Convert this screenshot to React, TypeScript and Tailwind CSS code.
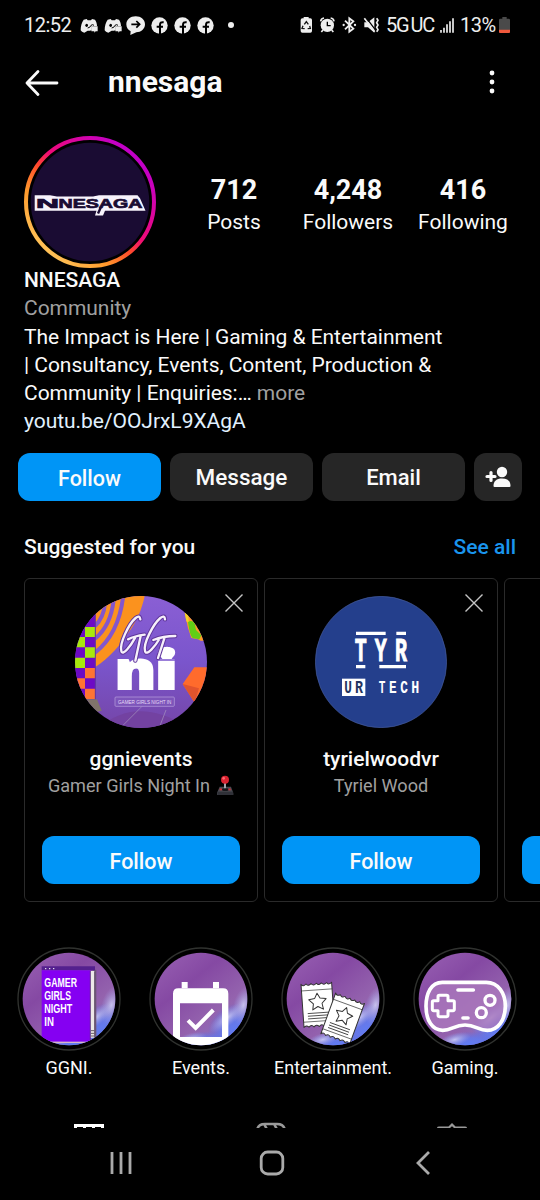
import type { ReactNode } from "react";

const stats = [
  { value: "712", label: "Posts", width: "w-[76px]" },
  { value: "4,248", label: "Followers", width: "w-[152px]" },
  { value: "416", label: "Following", width: "w-[78px]" },
];

/* ---------- Status bar icons ---------- */

const DiscordIcon = () => (
  <svg viewBox="238 54 54 45" className="h-[15px] w-[18px]">
    <path
      d="M249 59l9-2 3 4h10l3-4 9 2c4 6 6 12 6 19h-16v12l-5 2h-7l-10 6c-5-1-9-4-11-7 0-13 3-24 9-32z"
      fill="#eee"
    />
    <ellipse cx="258" cy="76" rx="4" ry="5" fill="#000" />
    <path d="M261 84q8-1 10-8q5-4 9 0" fill="none" stroke="#000" strokeWidth="3" />
    <path d="M272 79h19v15h-6l-4 4v-4h-9z" fill="#eee" />
  </svg>
);

const ChatArrowIcon = () => (
  <svg viewBox="378 47 57 57" className="h-[19px] w-[19px]">
    <path d="M407 48c16 0 28 10 28 24s-12 24-26 24l-18 8 1-11c-8-4-13-12-13-21 0-14 12-24 28-24z" fill="#eee" />
    <path d="M394 72h24M409 62l10 10-10 10" fill="none" stroke="#000" strokeWidth="5" />
  </svg>
);

const FacebookIcon = () => (
  <svg viewBox="0 0 51 51" className="h-[17px] w-[17px]">
    <circle cx="25.5" cy="25.5" r="24.5" fill="#eee" />
    <path d="M27 51V24c0-7 3-9 11-8M17 29h19" fill="none" stroke="#000" strokeWidth="6" />
  </svg>
);

const StatusBar = () => (
  <div className="flex h-[50px] items-center justify-between pl-6 pr-[30px] text-[#eee]">
    <div className="flex items-center">
      <span className="w-[56px] text-[20px] tracking-[-0.5px]">12:52</span>
      <div className="flex items-center gap-[6px]">
        <DiscordIcon />
        <DiscordIcon />
      </div>
      <div className="ml-1 flex items-center gap-[6px]">
        <ChatArrowIcon />
        <FacebookIcon />
        <FacebookIcon />
        <FacebookIcon />
      </div>
      <span className="ml-[14px] size-[6px] rounded-full bg-[#eee]" />
    </div>
    <div className="flex items-center">
      <svg viewBox="88 48 240 54" className="h-[18px] w-[80px]">
        {/* Battery saver */}
        <path d="M99 51h15v4h5q5 0 5 5v33q0 5-5 5H95q-5 0-5-5V60q0-5 5-5h4z" fill="#eee" />
        <path d="M101 73l6-8 6 8M117 78l2 7-8 1M102 86l-8-1 3-8" fill="none" stroke="#111" strokeWidth="4" />
        {/* Alarm */}
        <circle cx="170" cy="76" r="20" fill="#eee" />
        <path d="M150 64q1-9 10-10M180 54q9 1 10 10M157 90l-5 6M183 90l5 6" fill="none" stroke="#eee" strokeWidth="5" />
        <path d="M170 65v12h10" fill="none" stroke="#000" strokeWidth="4" />
        {/* Bluetooth */}
        <path d="M223 62l25 24-12 9V55l12 9-25 24" fill="none" stroke="#eee" strokeWidth="5.5" />
        <circle cx="219" cy="75" r="3.500" fill="#eee" />
        <circle cx="253" cy="75" r="3.500" fill="#eee" />
        {/* Vibrate / muted */}
        <path d="M281 67h11l19-15v46l-19-16h-11z" fill="#eee" />
        <path d="M286 52l27 36" stroke="#000" strokeWidth="4" />
        <path d="M281 55l31 40" stroke="#eee" strokeWidth="5" />
        <path d="M318 55l4 6-4 7 4 7-4 7 4 7-4 6" fill="none" stroke="#eee" strokeWidth="5" />
      </svg>
      <span className="ml-[6px] w-[54px] text-[20px] tracking-[-1.2px]">
        5G<span className="ml-[2px]">UC</span>
      </span>
      <svg viewBox="0 0 42 45" className="h-[15px] w-[14px]">
        <path d="M3 36v8M12 29v15M21 19v25M30 10v34M39 1v43" stroke="#eee" strokeWidth="5" />
      </svg>
      <span className="ml-[6px] w-[39px] text-[20px] tracking-[-0.5px]">13%</span>
      <svg viewBox="0 0 33 48" className="h-4 w-[11px]">
        <path d="M10 0h13v5h6q4 0 4 4v35q0 4-4 4H4q-4 0-4-4V9q0-4 4-4h6z" fill="#4a4a4a" />
        <path d="M0 38h33v6q0 4-4 4H4q-4 0-4-4z" fill="#f0583c" />
      </svg>
    </div>
  </div>
);

/* ---------- Profile ---------- */

const ProfileAvatar = () => (
  <svg viewBox="0 0 132 132" className="size-[132px] shrink-0">
    <defs>
      <linearGradient id="story" x1="0.15" y1="0.9" x2="0.85" y2="0.15">
        <stop offset="0" stopColor="#ffc45a" />
        <stop offset="0.25" stopColor="#ff9a2c" />
        <stop offset="0.45" stopColor="#ff4a2c" />
        <stop offset="0.58" stopColor="#f00a78" />
        <stop offset="1" stopColor="#c200c8" />
      </linearGradient>
    </defs>
    <circle cx="66" cy="66" r="64" fill="none" stroke="url(#story)" strokeWidth="4" />
    <circle cx="66" cy="66" r="59.3" fill="#1a0c33" />
    {/* Wordmark on its white plate */}
    <path d="M10.700 59.300H26l7 1.200h36l6-1.200h38.500l2.500 3 5.500 12.500H81l-2 4.700h-8l1.500-4.700H10.700z" fill="#f7f3fb" />
    <g fill="#1a0c33" stroke="#1a0c33" strokeWidth="0.7" fontFamily="'Liberation Sans', sans-serif" fontWeight="700" fontSize="13.4">
      <text x="12" y="72" textLength="23" lengthAdjust="spacingAndGlyphs">
        N
      </text>
      <text x="34.500" y="72" textLength="84" lengthAdjust="spacingAndGlyphs">
        NESAGA
      </text>
    </g>
    <path d="M77 71l-3 6.500" stroke="#1a0c33" strokeWidth="2.400" />
  </svg>
);

const Profile = () => (
  <section className="pl-6 pr-[18px]">
    <div className="flex h-[132px]">
      <ProfileAvatar />
      <div className="ml-10 flex pt-[38px] text-center">
        {stats.map((s) => (
          <div key={s.label} className={`flex flex-col items-center ${s.width}`}>
            <span className="text-[27px] font-bold leading-8">{s.value}</span>
            <span className="text-[21px] leading-8">{s.label}</span>
          </div>
        ))}
      </div>
    </div>
    <div className="-mt-[2px] text-[21px] leading-[28.3px] tracking-[-0.04px]">
      <h2 className="font-medium">NNESAGA</h2>
      <p className="text-[#a0a0a0]">Community</p>
      <p className="whitespace-nowrap">
        The Impact is Here | Gaming &amp; Entertainment
        <br />| Consultancy, Events, Content, Production &amp;
        <br />
        Community | Enquiries:… <span className="text-[#a0a0a0]">more</span>
      </p>
      <a className="block text-[#e0f1ff]">youtu.be/OOJrxL9XAgA</a>
    </div>
  </section>
);

const Actions = () => (
  <div className="mt-[17px] flex gap-[9px] px-[18px] text-[22px] font-medium">
    <button className="h-12 w-[143px] rounded-xl bg-[#0095f6] pt-1 text-[21.5px]">Follow</button>
    <button className="h-12 w-[143px] rounded-xl bg-[#262626] pt-[2px] text-[22.5px]">Message</button>
    <button className="h-12 w-[143px] rounded-xl bg-[#262626] pt-[2px]">Email</button>
    <button className="flex size-12 items-center justify-center rounded-xl bg-[#262626]">
      <svg viewBox="0 0 26 22" className="h-[22px] w-[26px]" fill="#fafafa">
        <circle cx="17" cy="6" r="5.2" />
        <path d="M8.5 20c0-5 3-7.500 8.500-7.500s8.500 2.500 8.500 7.500q0 1-1 1h-15q-1 0-1-1z" />
        <path d="M6 6.500v8M2 10.500h8" stroke="#fafafa" strokeWidth="3.200" strokeLinecap="round" />
      </svg>
    </button>
  </div>
);

/* ---------- Suggestions ---------- */

const GG_STROKES =
  "M361 148q-2-14-14-4C326 162 298 220 304 243C308 260 332 228 346 202M324 208q20-10 50-14M362 198l-16 74M435 148q-1-14-14-4C400 162 369 220 375 243C379 260 405 230 420 204M400 210q30-12 66-12M434 202l-20 62";

const GgniAvatar = () => (
  <svg viewBox="165 78 396 396" className="size-[132px]">
    <defs>
      <clipPath id="ggClip">
        <circle cx="363" cy="276" r="198" />
      </clipPath>
      <linearGradient id="ggBg" x1="0" y1="0" x2="0" y2="1">
        <stop offset="0" stopColor="#8a5fd4" />
        <stop offset="0.5" stopColor="#7a55cc" />
        <stop offset="1" stopColor="#7546a8" />
      </linearGradient>
    </defs>
    <g clipPath="url(#ggClip)">
      <rect x="165" y="78" width="396" height="396" fill="url(#ggBg)" />
      <path d="M225 78H374C365 120 350 155 324 190C300 226 270 262 225 292z" fill="#fb921e" />
      <path d="M225 168q26-25 30-68M225 206q47-38 56-116M225 248q70-55 84-165" fill="none" stroke="#8356cd" strokeWidth="12" />
      {/* Checkerboard strip */}
      <rect x="165" y="78" width="61" height="310" fill="#6d0ac4" />
      <path d="M195 171h31v30h-31zM165 201h30v31h-30zM195 232h31v31h-31zM165 263h30v31h-30z" fill="#a8e80d" />
      <path d="M195 294h31v31h-31zM165 325h30v31h-30zM195 356h31v31h-31z" fill="#ff7433" />
      <path d="M226 130v260" stroke="#5f369f" strokeWidth="3" />
      <path d="M165 360l30 28h36l14 34-40 10z" fill="#80736b" />
      {/* Side shapes */}
      <path d="M494 128l52 32 16 52h-20l-8-4-20-4-10-30z" fill="#ff9b23" />
      <path d="M494 128l10 4 3 28-8-6z" fill="#f3d12a" />
      <path d="M504 156q12-8 20 4l4 20 16 16-6 12-20-4q-8-4-14-48z" fill="#61ce16" />
      <path d="M488 342l35-50h40v64l-39 42z" fill="#ff6b2c" />
      <path d="M488 342l49 13-13 43z" fill="#e2542d" />
      {/* Floor */}
      <path d="M235 474q60-50 126-50t144 48z" fill="#7342a1" />
      <path d="M310 465l56-56M420 467l18-47" stroke="#a897c0" strokeWidth="2" />
      <g fontFamily="'Open Sans', sans-serif" fontWeight="800" fontSize="158" fill="#fff" stroke="#fff" strokeWidth="6">
        <text x="284" y="358" textLength="124" lengthAdjust="spacingAndGlyphs">n</text>
        <text x="404" y="358" textLength="70" lengthAdjust="spacingAndGlyphs">i</text>
      </g>
      <circle cx="441" cy="251" r="21" fill="#fff" />
      <path d="M408 270h64" stroke="#7a55cc" strokeWidth="4" />
      <path d={GG_STROKES} fill="none" stroke="#60369d" strokeWidth="13" strokeLinecap="round" strokeLinejoin="round" />
      <path d={GG_STROKES} fill="none" stroke="#f6f0fb" strokeWidth="7" strokeLinecap="round" strokeLinejoin="round" />
      <rect x="285" y="381" width="178" height="28" rx="3" fill="#7d55ba" stroke="#bba4df" strokeWidth="2" />
      <text x="294" y="401" fontFamily="'Liberation Sans', sans-serif" fontSize="16" fill="#e7dcf8" textLength="160" lengthAdjust="spacingAndGlyphs">
        GAMER GIRLS NIGHT IN
      </text>
    </g>
  </svg>
);

const TyrAvatar = () => (
  <svg viewBox="165 78 396 396" className="size-[132px]">
    <circle cx="363" cy="276" r="197" fill="#243f8c" stroke="#465a98" strokeWidth="2" />
    <path d="M288 190h89M409 190h29M288 290h28M358 290h80" stroke="#fff" strokeWidth="10" />
    <g fontFamily="'Liberation Mono', monospace" fontWeight="700" fill="#fff">
      <g fontSize="100" stroke="#fff" strokeWidth="3">
        <text x="284" y="272" textLength="36" lengthAdjust="spacingAndGlyphs">T</text>
        <text x="344" y="272" textLength="36" lengthAdjust="spacingAndGlyphs">Y</text>
        <text x="405" y="272" textLength="36" lengthAdjust="spacingAndGlyphs">R</text>
      </g>
      <rect x="246" y="326" width="70" height="52" />
      <g fontSize="54">
        <text x="253" y="370" fill="#24345f" textLength="23" lengthAdjust="spacingAndGlyphs">U</text>
        <text x="285" y="370" fill="#24345f" textLength="24" lengthAdjust="spacingAndGlyphs">R</text>
        <text x="356" y="370" textLength="20" lengthAdjust="spacingAndGlyphs">T</text>
        <text x="387" y="370" textLength="23" lengthAdjust="spacingAndGlyphs">E</text>
        <text x="421" y="370" textLength="23" lengthAdjust="spacingAndGlyphs">C</text>
        <text x="454" y="370" textLength="24" lengthAdjust="spacingAndGlyphs">H</text>
      </g>
    </g>
  </svg>
);

const Joystick = () => (
  <svg viewBox="588 615 54 63" className="h-[21px] w-[18px]">
    <path d="M599 650h34l7 19v6h-49v-6z" fill="#494a50" />
    <path d="M592 665h47v10h-47z" fill="#303138" />
    <path d="M615 630v28" stroke="#a3a3aa" strokeWidth="6" />
    <ellipse cx="616" cy="659" rx="10" ry="4" fill="#17171b" />
    <circle cx="615" cy="629" r="12" fill="#d92331" />
    <circle cx="611" cy="625" r="4" fill="#ff6870" />
    <path d="M599 658h7M625 658h7" stroke="#d32632" strokeWidth="5" />
  </svg>
);

const SuggestionCard = ({ avatar, name, subtitle }: { avatar?: ReactNode; name?: string; subtitle?: ReactNode }) => (
  <div className="relative flex h-[324px] w-[234px] shrink-0 flex-col items-center rounded-md border border-[#2a2a2a] px-[17px] pt-[17px]">
    <svg viewBox="0 0 18 18" className="absolute right-[14px] top-[15px] size-[18px]">
      <path d="M.5.5l17 17M17.500.5l-17 17" stroke="#c4c4c4" strokeWidth="1.400" />
    </svg>
    <div className="size-[132px]">{avatar}</div>
    <h3 className="mt-[17px] h-7 text-[21px] font-medium leading-7">{name}</h3>
    <p className="flex h-[26px] items-center gap-[6px] whitespace-nowrap text-[18.1px] text-[#a0a0a0]">{subtitle}</p>
    <button className="mt-[37px] h-12 w-full shrink-0 rounded-xl bg-[#0095f6] pt-1 text-[21.5px] font-medium">
      {name && "Follow"}
    </button>
  </div>
);

/* ---------- Highlights ---------- */

const HighlightDefs = () => (
  <svg className="absolute size-0">
    <defs>
      <linearGradient id="sky" x1="0.1" y1="0" x2="0.9" y2="1">
        <stop offset="0" stopColor="#9a62b4" />
        <stop offset="0.35" stopColor="#8549a3" />
        <stop offset="0.65" stopColor="#9463ae" />
        <stop offset="1" stopColor="#7f7fd8" />
      </linearGradient>
      <radialGradient id="cloud">
        <stop offset="0" stopColor="#d3d2f6" stopOpacity="0.85" />
        <stop offset="1" stopColor="#a2a0e4" stopOpacity="0" />
      </radialGradient>
      <radialGradient id="blue">
        <stop offset="0" stopColor="#5f7cf4" />
        <stop offset="0.5" stopColor="#6079ee" stopOpacity="0.8" />
        <stop offset="1" stopColor="#5a70e8" stopOpacity="0" />
      </radialGradient>
      <clipPath id="disc">
        <circle cx="156" cy="156" r="139" />
      </clipPath>
    </defs>
  </svg>
);

const Highlight = ({ label, children }: { label: string; children: ReactNode }) => (
  <div className="flex w-[132px] shrink-0 flex-col items-center">
    <svg viewBox="0 0 312 312" className="size-[104px]">
      <circle cx="156" cy="156" r="153" fill="none" stroke="#30322f" strokeWidth="4" />
      <g clipPath="url(#disc)">
        <rect width="312" height="312" fill="url(#sky)" />
        <ellipse cx="262" cy="255" rx="85" ry="85" fill="url(#blue)" />
        <ellipse cx="170" cy="292" rx="90" ry="38" fill="url(#blue)" />
        <ellipse cx="283" cy="175" rx="30" ry="60" fill="url(#cloud)" transform="rotate(15 283 175)" />
        <ellipse cx="235" cy="212" rx="66" ry="24" fill="url(#cloud)" transform="rotate(-38 235 212)" />
        <ellipse cx="125" cy="278" rx="50" ry="20" fill="url(#cloud)" transform="rotate(-15 125 278)" />
        {children}
      </g>
    </svg>
    <span className="mt-[5px] whitespace-nowrap text-[18px] leading-6">{label}</span>
  </div>
);

const BookArt = () => (
  <>
    <path d="M229 66l9 3v203h-11z" fill="#6f5778" />
    <path d="M74 58h160v12H74z" fill="#54208e" />
    <path d="M74 70h147v214H74z" fill="#8500f2" />
    <path d="M221 72h11v200h-11z" fill="#ede9e8" />
    <path d="M220 72v210M233 74v197" stroke="#55465f" strokeWidth="2" />
    <path d="M222 251h10M222 259h10M222 267h10" stroke="#665b65" strokeWidth="3" />
    <path d="M78 286h145" stroke="#d6b7c8" strokeWidth="4" />
    <path d="M84 65h4M96 65h4M108 65h4" stroke="#fff" strokeWidth="3" />
    <g fill="#fff" fontFamily="'Liberation Sans', sans-serif" fontWeight="700" fontSize="40">
      <text x="82" y="121" textLength="98" lengthAdjust="spacingAndGlyphs">GAMER</text>
      <text x="82" y="160" textLength="80" lengthAdjust="spacingAndGlyphs">GIRLS</text>
      <text x="82" y="199" textLength="84" lengthAdjust="spacingAndGlyphs">NIGHT</text>
      <text x="82" y="237" textLength="29" lengthAdjust="spacingAndGlyphs">IN</text>
    </g>
  </>
);

const CalendarArt = () => (
  <>
    <path d="M98 124h18v-19h-18zM192 124h18v-19h-18z" fill="#fff" />
    <path
      d="M88 124h134q16 0 16 16v172H72V140q0-16 16-16zM93 169v101h126V169z"
      fill="#fff"
      fillRule="evenodd"
    />
    <path d="M117 220l23 23 53-54" fill="none" stroke="#fff" strokeWidth="12" />
  </>
);

const Ticket = () => (
  <g fill="#fff" stroke="#333" strokeWidth="3" strokeLinejoin="round">
    <path d="M0 0q7 9 15 0q7 9 15 0q8 9 16 0q7 9 15 0q8 9 16 0q7 9 15 0V130q-8-9-15 0q-8-9-16 0q-7-9-15 0q-8-9-16 0q-7-9-15 0q-8-9-15 0z" />
    <path d="M0 20h92M0 114h92" strokeWidth="2" />
    <path d="M46 30l8 15 18 3-13 13 3 18-16-9-16 9 3-18-13-13 18-3z" />
    <path d="M14 89h64M14 97h64M14 105h64" strokeWidth="2.500" />
  </g>
);

const TicketsArt = () => (
  <>
    <g transform="translate(60 112) rotate(-4)">
      <Ticket />
    </g>
    <g transform="translate(164 138) rotate(20)">
      <Ticket />
    </g>
  </>
);

const GamepadArt = () => (
  <g fill="none" stroke="#fff" strokeWidth="11" strokeLinecap="round" strokeLinejoin="round">
    <path
      d="M88 106H220C256 106 277 139 277 178C277 220 254 250 223 250C196 250 188 234 156 234C124 234 116 250 89 250C58 250 39 220 39 178C39 139 54 106 88 106z"
      fill="#ab79bd"
      fillOpacity="0.8"
    />
    <path d="M79 145h22q4 0 4 4v12h15q4 0 4 4v22q0 4-4 4h-15v14q0 4-4 4H79q-4 0-4-4v-14H62q-4 0-4-4v-22q0-4 4-4h13v-12q0-4 4-4z" strokeWidth="9" />
    <path d="M135 129h46M150 213h15" />
    <circle cx="231" cy="160" r="15" strokeWidth="10" />
    <circle cx="205" cy="197" r="15" strokeWidth="10" />
  </g>
);

/* ---------- Bottom ---------- */

const ProfileTabs = () => (
  <div className="mt-[42px] flex h-[6px] shrink-0 items-start justify-between overflow-hidden pl-[74px] pr-[73px]">
    <svg viewBox="0 0 30 30" className="size-[30px] shrink-0" fill="none" stroke="#fff" strokeWidth="3">
      <path d="M1.500 3.500h27v26h-27zM10.500 3v26M19.500 3v26" />
    </svg>
    <svg viewBox="0 0 30 30" className="size-[30px] shrink-0" fill="none" stroke="#999" strokeWidth="2.500">
      <path d="M9 2h12q8 0 8 8v11q0 8-8 8H9q-8 0-8-8V10q0-8 8-8zM8 2l4 7M18 2l4 7" />
    </svg>
    <svg viewBox="0 0 30 30" className="size-[30px] shrink-0" fill="none" stroke="#999" strokeWidth="2.200">
      <path d="M2 5.500h10l3-3 3 3h10q1 0 1 1v21H1v-21q0-1 1-1z" />
    </svg>
  </div>
);

const SystemNav = () => (
  <nav className="flex h-[70px] shrink-0 items-center pl-[109px]">
    <svg viewBox="0 0 24 26" className="mr-[126px] h-[26px] w-6">
      <path d="M3 2v22M12 2v22M21 2v22" stroke="#aaa" strokeWidth="2.800" />
    </svg>
    <svg viewBox="0 0 26 26" className="mr-[130px] size-[26px]">
      <rect x="2.200" y="2" width="21.600" height="22" rx="6.500" fill="none" stroke="#aaa" strokeWidth="2.800" />
    </svg>
    <svg viewBox="0 0 16 26" className="h-[26px] w-4">
      <path d="M14 2L3 13l11 11" fill="none" stroke="#aaa" strokeWidth="2.800" />
    </svg>
  </nav>
);

export default function App() {
  return (
    <div className="flex h-[1200px] w-[540px] flex-col overflow-hidden bg-black font-[Roboto,sans-serif] text-[#fafafa]">
      <StatusBar />
      <header className="flex h-[86px] items-start pl-6 pr-[45px] pt-[11px]">
        <svg viewBox="0 0 36 28" className="mt-[8px] h-7 w-9">
          <path d="M14 2.500L3 14l11 11.500M3 14h30" fill="none" stroke="#fafafa" strokeWidth="2.800" strokeLinecap="round" strokeLinejoin="round" />
        </svg>
        <h1 className="ml-12 mt-px flex-1 text-[30px] font-bold leading-[40px]">nnesaga</h1>
        <svg viewBox="0 0 6 26" className="mt-[8px] h-[26px] w-[6px]" fill="#fafafa">
          <circle cx="3" cy="4" r="2.400" />
          <circle cx="3" cy="13" r="2.400" />
          <circle cx="3" cy="22" r="2.400" />
        </svg>
      </header>

      <Profile />
      <Actions />

      <div className="mt-[32px] flex justify-between pl-6 pr-6 text-[21px] font-medium leading-7">
        <h2>Suggested for you</h2>
        <a className="text-[#1a95ee]">See all</a>
      </div>
      <div className="mt-[17px] flex shrink-0 gap-[6px] pl-6">
        <SuggestionCard avatar={<GgniAvatar />} name="ggnievents" subtitle={<>Gamer Girls Night In <Joystick /></>} />
        <SuggestionCard avatar={<TyrAvatar />} name="tyrielwoodvr" subtitle="Tyriel Wood" />
        <SuggestionCard />
      </div>

      <HighlightDefs />
      <div className="mt-[45px] flex shrink-0 pl-[3px]">
        <Highlight label="GGNI.">
          <BookArt />
        </Highlight>
        <Highlight label="Events.">
          <CalendarArt />
        </Highlight>
        <Highlight label="Entertainment.">
          <TicketsArt />
        </Highlight>
        <Highlight label="Gaming.">
          <GamepadArt />
        </Highlight>
      </div>
      <ProfileTabs />
      <SystemNav />
    </div>
  );
}
